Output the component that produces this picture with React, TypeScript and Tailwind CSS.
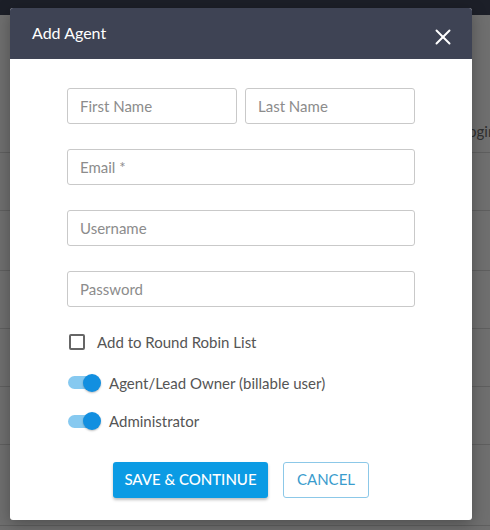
import { X } from 'lucide-react'

const rows = [
  'h-[58px]',
  'h-[60px]',
  'h-[58px]',
  'h-[58px]',
  'h-[58px]',
  'h-[81px]',
]

function Field({ placeholder }: { placeholder: string }) {
  return (
    <input
      type="text"
      placeholder={placeholder}
      className="h-[36px] w-full min-w-0 rounded-[3px] border border-[#c9c9c9] bg-white px-[12px] text-[15px] text-[#333] outline-none placeholder:text-[#8c8c8c]"
    />
  )
}

function Toggle({ label }: { label: string }) {
  return (
    <label className="flex items-center gap-[8px]">
      <span className="relative flex h-[18px] w-[34px] items-center">
        <span className="ml-[1px] h-[13px] w-[30px] rounded-full bg-[#86c9f0]" />
        <span className="absolute right-0 top-0 h-[18px] w-[18px] rounded-full bg-[#128fe0] shadow-[0_1px_2px_rgba(0,0,0,0.25)]" />
      </span>
      <span className="text-[15px] text-[#555]">{label}</span>
    </label>
  )
}

export default function App() {
  return (
    <div className="relative h-[530px] w-[490px] overflow-hidden bg-[#6f6f6f] font-['Lato',sans-serif]">
      {/* Page behind the overlay */}
      <div className="h-[15px] bg-[#1c1f28]" />
      <div className="flex h-[138px] items-end overflow-hidden border-b border-[#5f5f5f] pb-[10px] pl-[430px]">
        <span className="whitespace-nowrap text-[15px] text-[#2f2f2f]">Last Login</span>
      </div>
      {rows.map((h, i) => (
        <div key={i} className={`${h} border-b border-[#5f5f5f]`} />
      ))}

      {/* Modal */}
      <div className="absolute left-[10px] top-[8px] flex h-[512px] w-[462px] flex-col overflow-hidden rounded-[3px] bg-white shadow-[0_4px_16px_rgba(0,0,0,0.3)]">
        <div className="flex h-[51px] shrink-0 items-center justify-between bg-[#3e4354] pl-[22px] pr-[16px]">
          <h2 className="pb-[2px] text-[16px] text-white">Add Agent</h2>
          <button type="button" className="mt-[6px] text-white">
            <X size={26} strokeWidth={1.8} />
          </button>
        </div>

        <div className="flex flex-1 flex-col px-[57px] pt-[29px]">
          <div className="flex flex-col gap-[25px]">
            <div className="flex gap-[8px]">
              <Field placeholder="First Name" />
              <Field placeholder="Last Name" />
            </div>
            <Field placeholder="Email *" />
            <Field placeholder="Username" />
            <Field placeholder="Password" />
          </div>

          <label className="mt-[24px] flex items-center gap-[12px] pl-[2px]">
            <span className="h-[16px] w-[16px] rounded-[2px] border-2 border-[#666]" />
            <span className="text-[15px] text-[#555]">Add to Round Robin List</span>
          </label>

          <div className="mt-[18px] flex flex-col gap-[16px]">
            <Toggle label="Agent/Lead Owner (billable user)" />
            <Toggle label="Administrator" />
          </div>

          <div className="mt-[29px] flex justify-center gap-[15px]">
            <button
              type="button"
              className="h-[36px] w-[155px] rounded-[3px] bg-[#0b9be4] text-[15px] font-medium text-white shadow-[0_2px_3px_rgba(0,0,0,0.25)]"
            >
              SAVE &amp; CONTINUE
            </button>
            <button
              type="button"
              className="h-[36px] w-[86px] rounded-[3px] border border-[#8cc8e8] bg-white text-[15px] text-[#3a9ccd]"
            >
              CANCEL
            </button>
          </div>
        </div>
      </div>
    </div>
  )
}
